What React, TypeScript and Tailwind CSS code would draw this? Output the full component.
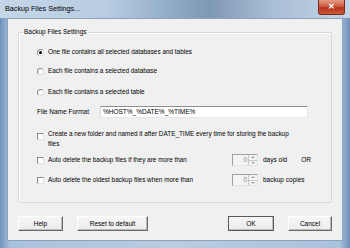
import React from "react";

const font = { fontFamily: '"Liberation Sans", Arial, sans-serif' };

function Radio({ checked, label }: { checked?: boolean; label: string }) {
  return (
    <div className="flex items-center h-[12px]">
      <div className="w-[7px] h-[7px] rounded-full border border-t-[#8a8a8a] border-l-[#8a8a8a] border-r-[#dcdcdc] border-b-[#dcdcdc] bg-white flex items-center justify-center">
        {checked && <div className="w-[3px] h-[3px] rounded-full bg-black" />}
      </div>
      <span className="ml-[4px] text-[6.4px] text-black whitespace-nowrap">{label}</span>
    </div>
  );
}

function Check() {
  return (
    <div className="w-[7px] h-[7px] shrink-0 border border-t-[#8a8a8a] border-l-[#8a8a8a] border-r-[#e0e0e0] border-b-[#e0e0e0] bg-white" />
  );
}

function Spin() {
  return (
    <div className="w-[26px] h-[12px] flex border border-t-[#a0a0a0] border-l-[#a0a0a0] border-r-[#e4e4e4] border-b-[#e4e4e4] bg-[#f4f4f4]">
      <div className="flex-1 flex items-center justify-end pr-[1px] text-[6.5px] text-[#8a8a8a]">0</div>
      <div className="w-[9px] flex flex-col border-l border-[#c8c8c8]">
        <div className="flex-1 flex items-center justify-center border-b border-[#c8c8c8]">
          <div className="w-0 h-0 border-l-[2px] border-r-[2px] border-b-[2px] border-l-transparent border-r-transparent border-b-[#a0a0a0]" />
        </div>
        <div className="flex-1 flex items-center justify-center">
          <div className="w-0 h-0 border-l-[2px] border-r-[2px] border-t-[2px] border-l-transparent border-r-transparent border-t-[#a0a0a0]" />
        </div>
      </div>
    </div>
  );
}

function Btn({ label, w, def }: { label: string; w: string; def?: boolean }) {
  return (
    <div
      className={`${w} h-[15px] flex items-center justify-center text-[6.5px] text-black bg-[linear-gradient(180deg,#f6f6f6_0%,#ececec_100%)] border ${
        def
          ? "border-[#5a5a5a]"
          : "border-t-white border-l-white border-r-[#6a6a6a] border-b-[#6a6a6a]"
      } shadow-[inset_-1px_-1px_0_#bcbcbc]`}
    >
      {label}
    </div>
  );
}

export default function App() {
  return (
    <div
      className="w-[350px] h-[248px] relative overflow-hidden flex flex-col bg-[linear-gradient(90deg,#6f92bd_0%,#a9c2dc_3%,#b9cde1_50%,#a9c2dc_97%,#6f8fb8_100%)]"
      style={font}
    >
      {/* title bar */}
      <div className="h-[18px] flex items-center pl-[5px] bg-[linear-gradient(90deg,#c5d6e8_0%,#b8cde2_30%,#8fa9c4_50%,#7f98b4_60%,#a9bfd6_78%,#c3d4e6_100%)]">
        <span className="text-[7.2px] text-black">Backup Files Settings...</span>
      </div>
      {/* close button */}
      <div className="absolute left-[318px] top-0 w-[27px] h-[15px] rounded-b-[3px] border border-t-0 border-[#7a2b20] bg-[linear-gradient(180deg,#e49a86_0%,#cf5a42_45%,#b8321c_55%,#c95a3a_100%)] flex items-center justify-center">
        <span className="text-white text-[8px] font-bold leading-none">✕</span>
      </div>

      {/* client area */}
      <div className="mx-[7px] flex-1 mb-[7px] bg-[#f0f0f0] border border-[#8aa2bb] flex flex-col px-[10px] pt-[13px]">
        <div className="relative h-[171px] border border-[#d5d9dd] rounded-[2px] shadow-[inset_1px_1px_0_#ffffff] flex flex-col pl-[18px] pt-[13px]">
          <span className="absolute left-[4px] top-[-6px] bg-[#f0f0f0] px-[1px] text-[6.5px] leading-[10px] text-black">
            Backup Files Settings
          </span>
          <Radio checked label="One file contains all selected databases and tables" />
          <div className="mt-[7px]">
            <Radio label="Each file contains a selected database" />
          </div>
          <div className="mt-[9px]">
            <Radio label="Each file contains a selected table" />
          </div>
          <div className="mt-[8px] h-[12px] flex items-center">
            <span className="w-[63px] text-[6.5px] text-black">File Name Format</span>
            <div className="w-[208px] h-[12px] bg-white border border-t-[#8f8f8f] border-l-[#d8dde2] border-r-[#e3e8ee] border-b-[#e3e8ee] flex items-center pl-[2px] text-[6.5px] text-black">
              %HOST%_%DATE%_%TIME%
            </div>
          </div>
          <div className="mt-[11px] flex items-start">
            <div className="mt-[4px]">
              <Check />
            </div>
            <div className="ml-[4px] text-[6.4px] leading-[9.5px] text-black whitespace-nowrap">
              Create a new folder and named it after DATE_TIME every time for storing the backup
              <br />
              files
            </div>
          </div>
          <div className="mt-[6px] h-[12px] flex items-center">
            <Check />
            <span className="ml-[4px] w-[184px] text-[6.4px] text-black whitespace-nowrap">
              Auto delete the backup files if they are more than
            </span>
            <Spin />
            <span className="ml-[5px] text-[6.5px] text-black">days old</span>
            <span className="ml-[14px] text-[6.5px] text-black">OR</span>
          </div>
          <div className="mt-[8px] h-[12px] flex items-center">
            <Check />
            <span className="ml-[4px] w-[184px] text-[6.4px] text-black whitespace-nowrap">
              Auto delete the oldest backup files when more than
            </span>
            <Spin />
            <span className="ml-[5px] text-[6.5px] text-black">backup copies</span>
          </div>
        </div>
        <div className="mt-[13px] flex items-center">
          <Btn label="Help" w="w-[45px]" />
          <div className="ml-[14px]">
            <Btn label="Reset to default" w="w-[71px]" />
          </div>
          <div className="ml-auto flex items-center">
            <Btn label="OK" w="w-[46px]" def />
            <div className="ml-[14px]">
              <Btn label="Cancel" w="w-[44px]" />
            </div>
          </div>
        </div>
      </div>
    </div>
  );
}
